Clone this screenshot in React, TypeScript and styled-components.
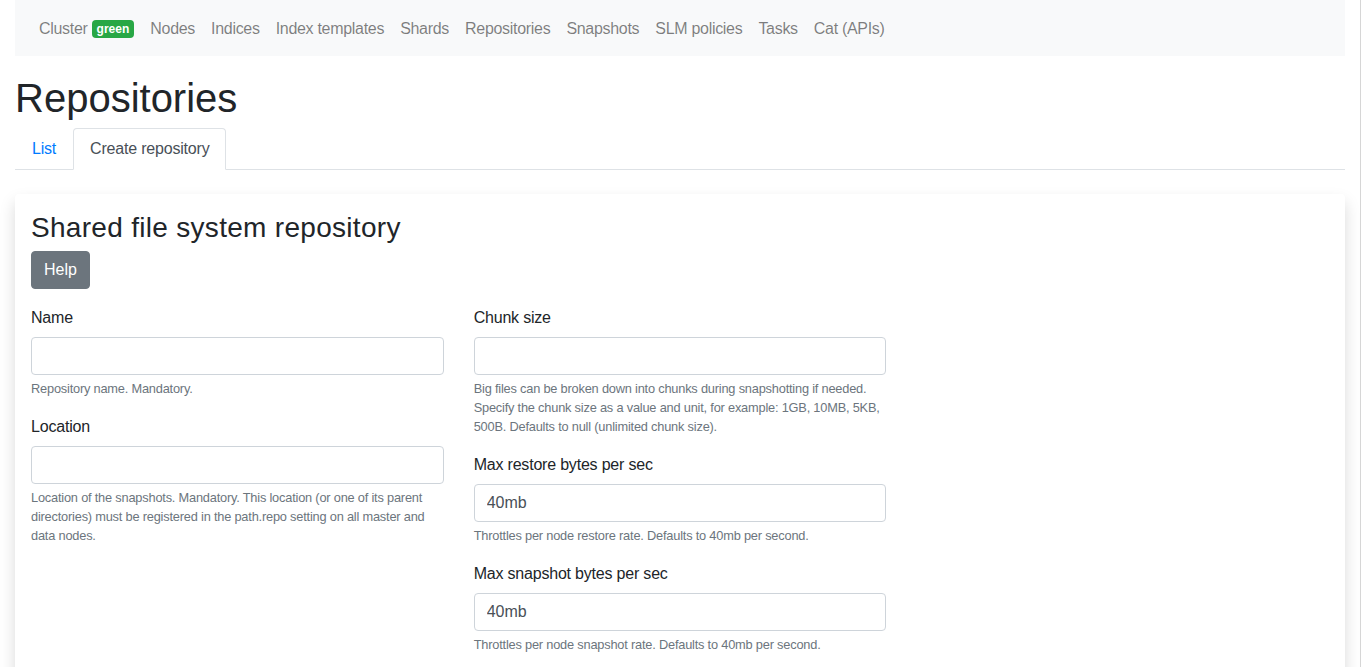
import * as React from "react"
import styled, { createGlobalStyle } from "styled-components"

const GlobalStyle = createGlobalStyle`
  html, body {
    margin: 0;
    background: #fff;
  }
  body {
    border-right: 1px solid #d6d6d6;
    font-family: "Liberation Sans", Arial, sans-serif;
    font-size: 16px;
    line-height: 1.5;
    color: #212529;
  }
  * {
    box-sizing: border-box;
  }
`

const navItems = [
  "Nodes",
  "Indices",
  "Index templates",
  "Shards",
  "Repositories",
  "Snapshots",
  "SLM policies",
  "Tasks",
  "Cat (APIs)",
]

type Field = {
  label: string
  value?: string
  help: string
}

const leftFields: Field[] = [
  { label: "Name", help: "Repository name. Mandatory." },
  {
    label: "Location",
    help: "Location of the snapshots. Mandatory. This location (or one of its parent directories) must be registered in the path.repo setting on all master and data nodes.",
  },
]

const rightFields: Field[] = [
  {
    label: "Chunk size",
    help: "Big files can be broken down into chunks during snapshotting if needed. Specify the chunk size as a value and unit, for example: 1GB, 10MB, 5KB, 500B. Defaults to null (unlimited chunk size).",
  },
  {
    label: "Max restore bytes per sec",
    value: "40mb",
    help: "Throttles per node restore rate. Defaults to 40mb per second.",
  },
  {
    label: "Max snapshot bytes per sec",
    value: "40mb",
    help: "Throttles per node snapshot rate. Defaults to 40mb per second.",
  },
]

const FormField = ({ label, value, help }: Field) => (
  <Group>
    <Label>{label}</Label>
    <Input type="text" defaultValue={value ?? ""} />
    <Help>{help}</Help>
  </Group>
)

const App = () => (
  <Page>
    <GlobalStyle />
    <Navbar>
      <NavLink>
        Cluster <Badge>green</Badge>
      </NavLink>
      {navItems.map(item => (
        <NavLink key={item}>{item}</NavLink>
      ))}
    </Navbar>

    <Title>Repositories</Title>

    <Tabs>
      <Tab>List</Tab>
      <Tab active>Create repository</Tab>
    </Tabs>

    <Card>
      <CardTitle>Shared file system repository</CardTitle>
      <Button>Help</Button>
      <FormRow>
        <Column>
          {leftFields.map(f => (
            <FormField key={f.label} {...f} />
          ))}
        </Column>
        <Column>
          {rightFields.map(f => (
            <FormField key={f.label} {...f} />
          ))}
        </Column>
        <Column />
      </FormRow>
    </Card>
  </Page>
)

export default App

// Styles
const Page = styled.div`
  padding: 0 15px;
`

const Navbar = styled.nav`
  display: flex;
  align-items: center;
  height: 56px;
  padding: 9px 16px 7px;
  background: #f8f9fa;
`

const NavLink = styled.a`
  display: flex;
  align-items: center;
  gap: 4px;
  padding: 8px;
  color: rgba(0, 0, 0, 0.5);
  font-size: 16px;
  letter-spacing: -0.3px;
  white-space: nowrap;
  cursor: pointer;
`

const Badge = styled.span`
  display: inline-block;
  padding: 3px 5px;
  font-size: 12px;
  font-weight: 700;
  line-height: 1;
  letter-spacing: 0;
  color: #fff;
  background: #28a745;
  border-radius: 4px;
`

const Title = styled.h1`
  margin: 18px 0 6px;
  font-size: 40px;
  font-weight: 500;
  line-height: 1.2;
`

const Tabs = styled.div`
  display: flex;
  border-bottom: 1px solid #dee2e6;
`

const Tab = styled.a<{ active?: boolean }>`
  display: block;
  margin-bottom: -1px;
  padding: 8px 16px;
  border: 1px solid transparent;
  border-color: ${p => (p.active ? "#dee2e6 #dee2e6 #fff" : "transparent")};
  border-radius: 4px 4px 0 0;
  background: ${p => (p.active ? "#fff" : "transparent")};
  color: ${p => (p.active ? "#495057" : "#007bff")};
  letter-spacing: -0.2px;
  cursor: pointer;
`

const Card = styled.div`
  margin-top: 24px;
  padding: 17px 16px 16px;
  background: #fff;
  border-radius: 4px;
  box-shadow: 0 8px 16px rgba(0, 0, 0, 0.15);
  min-height: 520px;
`

const CardTitle = styled.h3`
  margin: 0 0 6px;
  font-size: 28px;
  font-weight: 500;
  line-height: 1.2;
  letter-spacing: 0.3px;
`

const Button = styled.button`
  display: inline-block;
  padding: 6px 12px;
  font-family: inherit;
  font-size: 16px;
  line-height: 1.5;
  color: #fff;
  background: #6c757d;
  border: 1px solid #6c757d;
  border-radius: 4px;
  cursor: pointer;
`

const FormRow = styled.div`
  display: grid;
  grid-template-columns: repeat(3, 1fr);
  column-gap: 30px;
  margin-top: 16px;
`

const Column = styled.div`
  display: flex;
  flex-direction: column;
`

const Group = styled.div`
  margin-bottom: 16px;
`

const Label = styled.label`
  display: block;
  padding-top: 1px;
  margin-bottom: 7px;
  letter-spacing: -0.2px;
`

const Input = styled.input`
  display: block;
  width: 100%;
  height: 38px;
  padding: 6px 12px;
  font-family: inherit;
  font-size: 16px;
  color: #495057;
  background: #fff;
  border: 1px solid #ced4da;
  border-radius: 4px;
`

const Help = styled.small`
  display: block;
  margin-top: 4px;
  font-size: 12.8px;
  line-height: 1.5;
  letter-spacing: -0.2px;
  color: #6c757d;
`
